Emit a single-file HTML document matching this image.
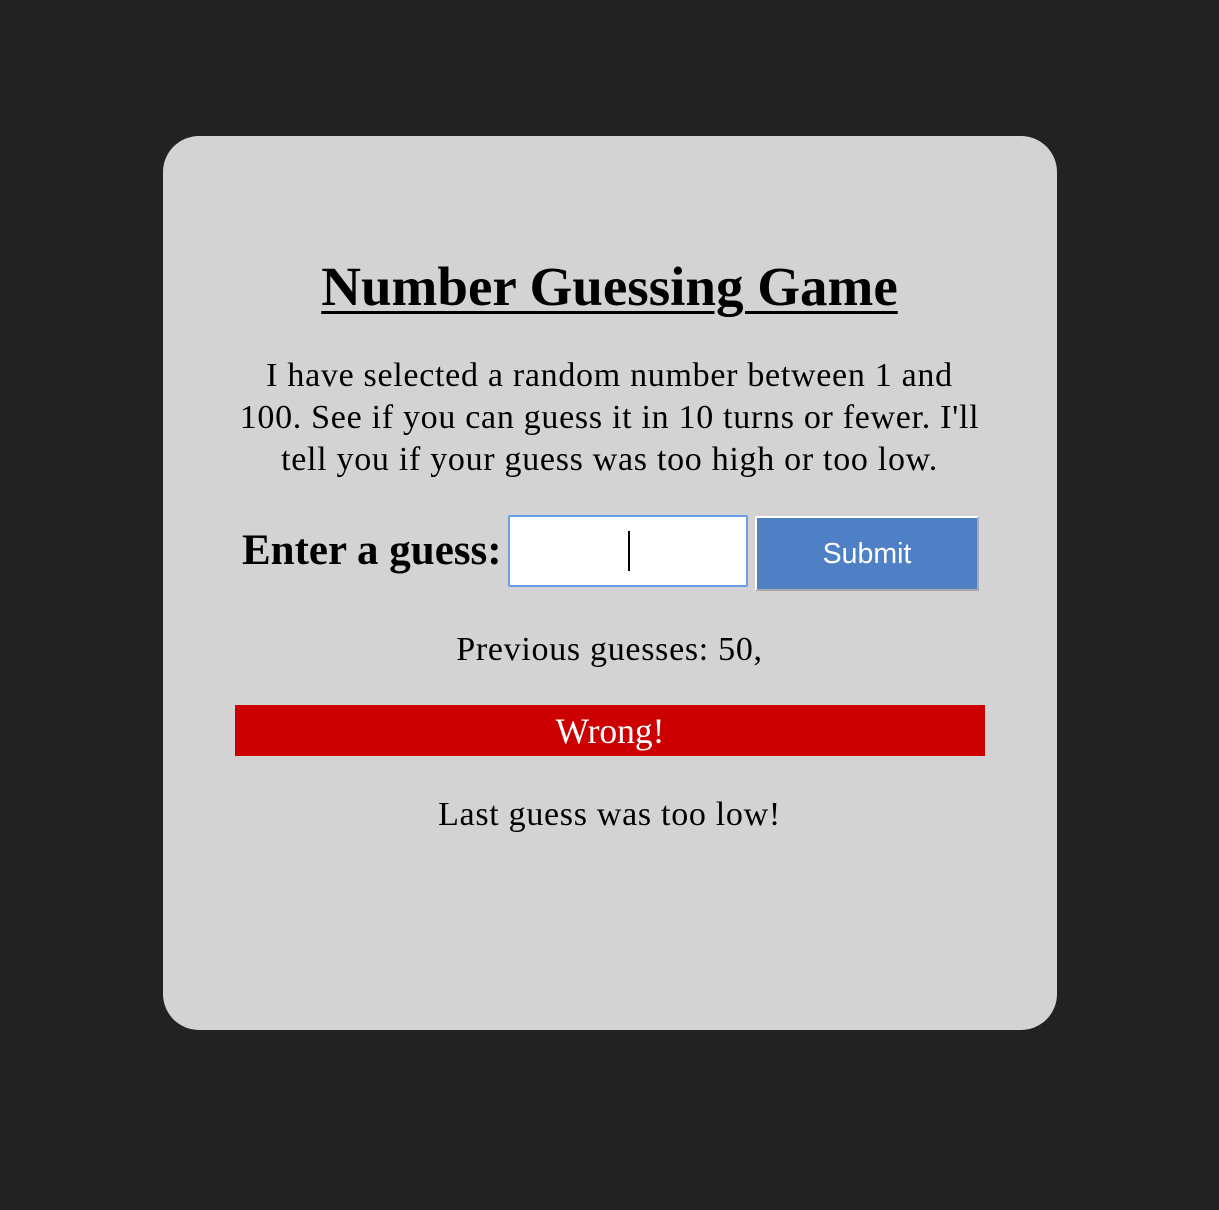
<!DOCTYPE html>
<html><head><style>
html,body{margin:0;padding:0;background:#222;width:1219px;height:1210px;overflow:hidden}
body{font-family:"Liberation Serif",serif;color:#000}
.card{position:absolute;left:163px;top:136px;width:894px;height:894px;background:#d3d3d3;border-radius:36px}
.c{position:absolute;left:0;width:1219px;text-align:center;white-space:nowrap}
h1{margin:0;font-size:55px;font-weight:bold;text-decoration:underline;text-decoration-thickness:3px;text-underline-offset:6px}
.p{font-size:34px;line-height:42px;letter-spacing:0.7px}
</style></head><body>
<div class="card"></div>
<div class="c" style="top:255px"><h1>Number Guessing Game</h1></div>
<div class="c p" style="top:355px">I have selected a random number between 1 and<br>100. See if you can guess it in 10 turns or fewer. I'll<br>tell you if your guess was too high or too low.</div>
<div style="position:absolute;left:242px;top:526px;font-size:43px;font-weight:bold;line-height:50px">Enter a guess:</div>
<div style="position:absolute;left:508px;top:515px;width:236px;height:68px;background:#fff;border:2px solid #6a9de8;border-radius:2px"></div>
<div style="position:absolute;left:628px;top:531px;width:2px;height:40px;background:#000"></div>
<div style="position:absolute;left:755px;top:516px;width:220px;height:71px;background:#4f7fc4;border-top:2px solid #fff;border-left:2px solid #fff;border-right:2px solid #aaa;border-bottom:2px solid #aaa;box-sizing:content-box;color:#fff;font-family:'Liberation Sans',sans-serif;font-size:28.5px;line-height:72px;text-align:center">Submit</div>
<div class="c p" style="top:629px">Previous guesses: 50,</div>
<div style="position:absolute;left:235px;top:705px;width:750px;height:51px;background:#cc0000;color:#fff;text-align:center;font-size:35.5px;line-height:53px">Wrong!</div>
<div class="c p" style="top:794px">Last guess was too low!</div>
</body></html>
